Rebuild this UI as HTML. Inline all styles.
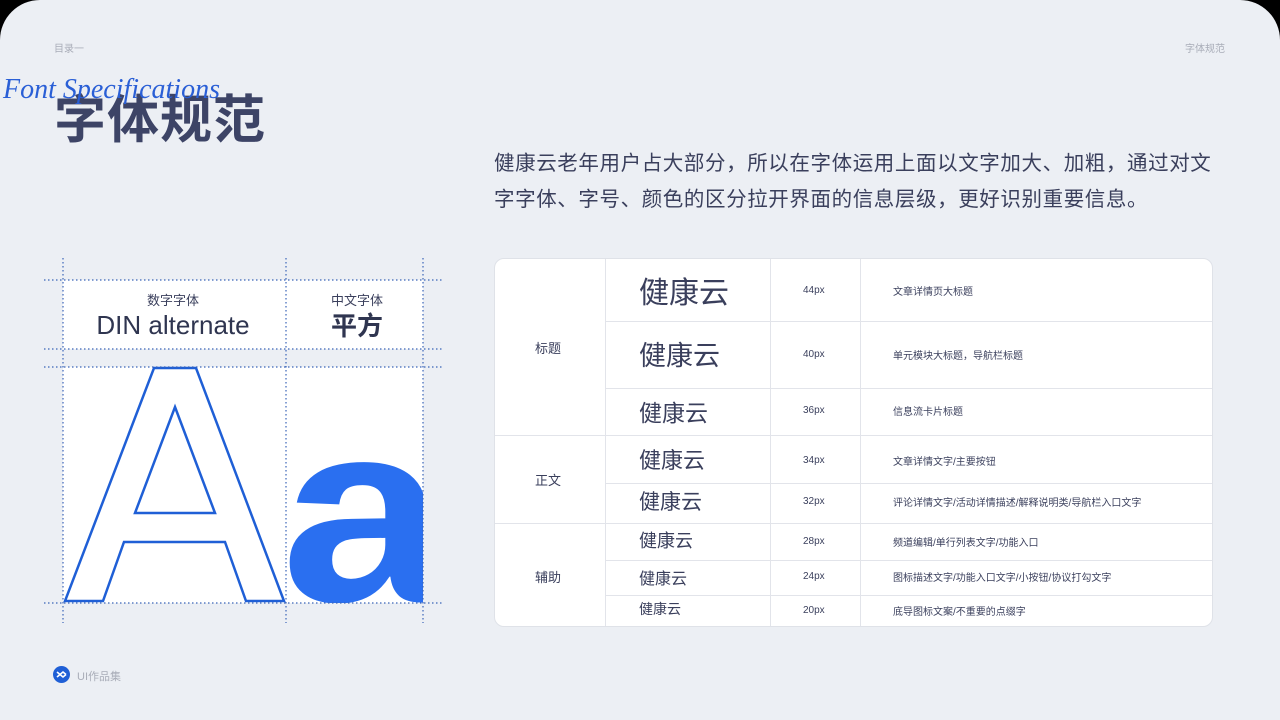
<!DOCTYPE html>
<html><head><meta charset="utf-8"><style>
body{margin:0;width:1280px;height:720px;background:#000;overflow:hidden;font-family:"Liberation Sans","Noto Sans CJK SC",sans-serif;}
.pg{position:absolute;left:0;top:0;width:1280px;height:720px;background:#eceff4;border-radius:40px 40px 0 0;}
.a{position:absolute;}
.small{font-size:10px;color:#a9adb8;}
.tbl{position:absolute;left:494px;top:258px;width:719px;height:369px;background:#fff;border:1px solid #dfe2e8;border-radius:10px;box-sizing:border-box;overflow:hidden;}
.h{position:absolute;height:1px;background:#e2e4ea;}
.v{position:absolute;width:1px;background:#e2e4ea;top:0;bottom:0;}
.t{position:absolute;color:#3a3f5c;white-space:nowrap;}
.k{margin-top:-4px}
.d{margin-top:-2px}
</style></head><body><div class="pg">
<div class="a small" style="left:54px;top:40px">目录一</div>
<div class="a small" style="left:1185px;top:40px">字体规范</div>
<div class="a" style="left:54px;top:78px;font-size:52px;font-weight:bold;color:#3d4466;letter-spacing:1px">字体规范</div>
<div class="a" style="left:3px;top:74px;font-family:'Liberation Serif',serif;font-style:italic;font-size:28px;color:#2a5fd6">Font Specifications</div>
<div class="a" style="left:494px;top:146px;width:780px;font-size:20.5px;letter-spacing:0.6px;line-height:36px;color:#3a3f5c;white-space:nowrap">健康云老年用户占大部分，所以在字体运用上面以文字加大、加粗，通过对文<br>字字体、字号、颜色的区分拉开界面的信息层级，更好识别重要信息。</div>

<svg class="a" style="left:0;top:0" width="480" height="640">
<defs><clipPath id="c"><rect x="286" y="367" width="137" height="236"/></clipPath></defs>
<rect x="63" y="280" width="360" height="69" fill="#fff"/>
<rect x="63" y="367" width="360" height="236" fill="#fff"/>
<text x="173" y="305" font-size="13" fill="#3a3f5c" text-anchor="middle">数字字体</text>
<text x="173" y="334" font-size="26" fill="#2f3550" text-anchor="middle">DIN alternate</text>
<text x="357" y="305" font-size="13" fill="#3a3f5c" text-anchor="middle">中文字体</text>
<text x="357" y="335" font-size="26" font-weight="bold" fill="#2f3550" text-anchor="middle">平方</text>
<path d="M154 368L196 368L284 601L246 601L225 542L124 542L103 601L65 601Z M175 407L215 513L135 513Z" fill="#fff" stroke="#1f5fd6" stroke-width="2.5" stroke-linejoin="miter"/>
<g clip-path="url(#c)"><text transform="translate(281 601) scale(1.15 1)" x="0" y="0" font-size="258" font-weight="bold" fill="#2a6ff0">a</text></g>
<g stroke="#3a64b8" stroke-width="1.2" stroke-dasharray="1.5 2.5">
<line x1="63" y1="258" x2="63" y2="623"/><line x1="286" y1="258" x2="286" y2="623"/><line x1="423" y1="258" x2="423" y2="623"/>
<line x1="44" y1="280" x2="443" y2="280"/><line x1="44" y1="349" x2="443" y2="349"/><line x1="44" y1="367" x2="443" y2="367"/><line x1="44" y1="603" x2="443" y2="603"/>
</g>
</svg>

<div class="tbl">
<div class="v" style="left:110px"></div><div class="v" style="left:275px"></div><div class="v" style="left:365px"></div>
<div class="h" style="left:110px;right:0;top:62px"></div>
<div class="h" style="left:110px;right:0;top:129px"></div>
<div class="h" style="left:0;right:0;top:176px"></div>
<div class="h" style="left:110px;right:0;top:224px"></div>
<div class="h" style="left:0;right:0;top:264px"></div>
<div class="h" style="left:110px;right:0;top:301px"></div>
<div class="h" style="left:110px;right:0;top:336px"></div>
<div class="t" style="left:40px;top:79px;font-size:13px">标题</div>
<div class="t" style="left:40px;top:211px;font-size:13px">正文</div>
<div class="t" style="left:40px;top:308px;font-size:13px">辅助</div>
<div class="t k" style="left:144px;top:13px;font-size:30px">健康云</div>
<div class="t k" style="left:144px;top:79px;font-size:27px">健康云</div>
<div class="t k" style="left:144px;top:139px;font-size:23px">健康云</div>
<div class="t k" style="left:144px;top:188px;font-size:22px">健康云</div>
<div class="t k" style="left:144px;top:231px;font-size:21px">健康云</div>
<div class="t k" style="left:144px;top:272px;font-size:18px">健康云</div>
<div class="t k" style="left:144px;top:310px;font-size:16px">健康云</div>
<div class="t k" style="left:144px;top:344px;font-size:14px">健康云</div>
<div class="t" style="left:308px;top:26px;font-size:10px">44px</div>
<div class="t" style="left:308px;top:90px;font-size:10px">40px</div>
<div class="t" style="left:308px;top:146px;font-size:10px">36px</div>
<div class="t" style="left:308px;top:196px;font-size:10px">34px</div>
<div class="t" style="left:308px;top:237px;font-size:10px">32px</div>
<div class="t" style="left:308px;top:277px;font-size:10px">28px</div>
<div class="t" style="left:308px;top:312px;font-size:10px">24px</div>
<div class="t" style="left:308px;top:346px;font-size:10px">20px</div>
<div class="t d" style="left:398px;top:26px;font-size:10px">文章详情页大标题</div>
<div class="t d" style="left:398px;top:90px;font-size:10px">单元模块大标题，导航栏标题</div>
<div class="t d" style="left:398px;top:146px;font-size:10px">信息流卡片标题</div>
<div class="t d" style="left:398px;top:196px;font-size:10px">文章详情文字/主要按钮</div>
<div class="t d" style="left:398px;top:237px;font-size:10px">评论详情文字/活动详情描述/解释说明类/导航栏入口文字</div>
<div class="t d" style="left:398px;top:277px;font-size:10px">频道编辑/单行列表文字/功能入口</div>
<div class="t d" style="left:398px;top:312px;font-size:10px">图标描述文字/功能入口文字/小按钮/协议打勾文字</div>
<div class="t d" style="left:398px;top:346px;font-size:10px">底导图标文案/不重要的点缀字</div>
</div>

<svg class="a" style="left:53px;top:666px" width="17" height="17"><circle cx="8.5" cy="8.5" r="8.5" fill="#1f5fd6"/><path d="M4 6l3 2.5 3-2.5 3 2.5M4 11l3-2.5 3 2.5 3-2.5" stroke="#fff" stroke-width="1.6" fill="none"/></svg>
<div class="a small" style="left:77px;top:668px;font-size:11px">UI作品集</div>
</div></body></html>
